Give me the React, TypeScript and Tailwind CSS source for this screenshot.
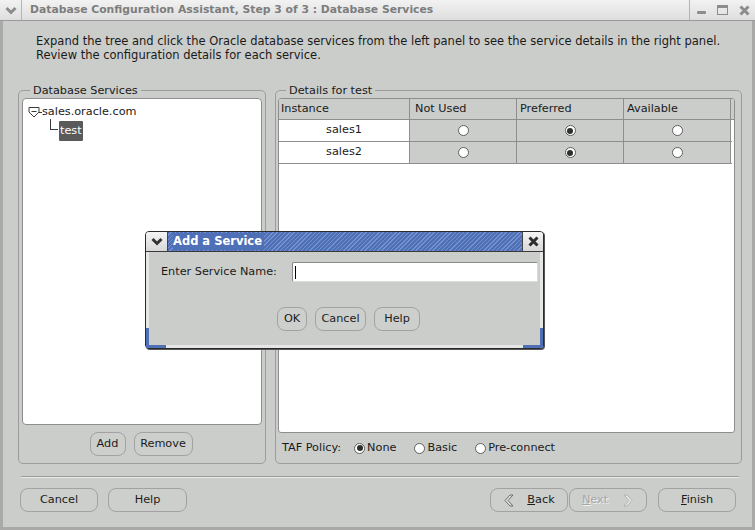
import type { ReactNode } from "react";
import clsx from "clsx";

function Radio({ on }: { on?: boolean }) {
  return (
    <span className="inline-flex h-[11px] w-[11px] shrink-0 items-center justify-center rounded-full border border-[#5e5e5e] bg-white">
      {on && <span className="h-[6px] w-[6px] rounded-full bg-[#2e2e2e]" />}
    </span>
  );
}

function Btn({ children, className }: { children: ReactNode; className?: string }) {
  return (
    <div
      className={clsx(
        "flex h-[24px] shrink-0 items-center justify-center rounded-[8px] border border-[#a2a2a2] bg-[#cdcfcc] text-[#1c1c1c]",
        className
      )}
    >
      {children}
    </div>
  );
}

function Chevron({ color }: { color: string }) {
  return (
    <svg width="12" height="9" viewBox="0 0 12 9">
      <path d="M1.5 2 L6 6.5 L10.5 2" fill="none" stroke={color} strokeWidth="3" />
    </svg>
  );
}

function CloseX({ color }: { color: string }) {
  return (
    <svg width="11" height="11" viewBox="0 0 11 11">
      <path d="M1.5 1.5 L9.5 9.5 M9.5 1.5 L1.5 9.5" stroke={color} strokeWidth="3" />
    </svg>
  );
}

const rows = ["sales1", "sales2"];

export default function App() {
  return (
    <div className="relative flex h-[530px] w-[755px] flex-col overflow-hidden bg-[#cbcdca] font-['DejaVu_Sans',sans-serif] text-[11.25px] text-[#1a1a1a]">
      {/* window title bar */}
      <div className="flex h-[21px] shrink-0 items-center border-b border-[#9a9a9a] bg-[linear-gradient(#f2f2f2,#dedede)]">
        <div className="flex h-full w-[22px] items-center justify-center border-r border-[#b4b4b4]">
          <Chevron color="#8c8c8c" />
        </div>
        <div className="ml-[8px] flex-1 text-[10.8px] font-bold text-[#7d7d7d]">
          Database Configuration Assistant, Step 3 of 3 : Database Services
        </div>
        <div className="flex h-full items-center gap-[11px] border-l border-[#b4b4b4] pl-[7px] pr-[5px]">
          <span className="mt-[5px] h-[3px] w-[9px] rounded-[1px] bg-[#8c8c8c]" />
          <span className="h-[10px] w-[11px] border border-t-[3px] border-[#8c8c8c]" />
          <CloseX color="#8c8c8c" />
        </div>
      </div>

      <div className="flex flex-1 flex-col border-x-[3px] border-b-[3px] border-[#a9aaa8] pl-[15px] pr-[9px]">
        <p className="ml-[18px] mt-[13px] text-[11.5px] leading-[14px]">
          Expand the tree and click the Oracle database services from the left panel to see the service details in the right panel.
          <br />
          Review the configuration details for each service.
        </p>

        <div className="mt-[22px] flex gap-[9px]">
          <fieldset className="flex h-[380px] w-[248px] flex-col rounded-[5px] border border-[#9c9c9c] px-[3px] pb-[8px]">
            <legend className="ml-[8px] px-[3px] leading-[13px]">Database Services</legend>
            <div className="mt-[1px] h-[327px] shrink-0 rounded-[4px] border border-[#8e8e8e] bg-white px-[5px] pt-[5px]">
              <div className="flex items-center">
                <svg width="12" height="12" viewBox="0 0 12 12">
                  <path d="M1 1.5 H11 V6 L6 11 L1 6 Z" fill="white" stroke="#3a3a3a" strokeWidth="1" />
                  <path d="M3.5 5.5 H8.5" stroke="#3a3a3a" strokeWidth="1" />
                </svg>
                <span className="-ml-[1px] h-[1px] w-[3px] bg-[#3a3a3a]" />
                <span className="leading-[16px]">sales.oracle.com</span>
              </div>
              <div className="ml-[22px] flex items-start">
                <span className="mt-[-1px] h-[11px] w-[8px] border-b border-l border-[#3a3a3a]" />
                <span className="ml-[1px] mt-[1px] rounded-[1px] bg-[#5a5a5a] px-[1px] leading-[20px] text-white">test</span>
              </div>
            </div>
            <div className="mt-[7px] flex justify-center gap-[8px] pr-[2px]">
              <Btn className="h-[23px] w-[36px]">Add</Btn>
              <Btn className="h-[23px] w-[59px]">Remove</Btn>
            </div>
          </fieldset>

          <fieldset className="flex h-[380px] w-[467px] flex-col rounded-[5px] border border-[#9c9c9c] pl-[2px] pr-[6px] pb-[8px]">
            <legend className="ml-[8px] px-[3px] leading-[13px]">Details for test</legend>
            <div className="mt-[1px] h-[335px] shrink-0 overflow-hidden rounded-[3px] border border-[#8e8e8e] bg-white">
              <div className="flex h-[21px] border-b border-[#8e8e8e] bg-[#cbcdca]">
                <div className="w-[131px] border-r border-[#8e8e8e] pl-[2px] leading-[20px]">Instance</div>
                <div className="w-[107px] border-r border-[#8e8e8e] pl-[5px] leading-[20px]">Not Used</div>
                <div className="w-[107px] border-r border-[#8e8e8e] pl-[3px] leading-[20px]">Preferred</div>
                <div className="w-[107px] border-r border-[#8e8e8e] pl-[3px] leading-[20px]">Available</div>
                <div className="flex-1" />
              </div>
              {rows.map((r) => (
                <div key={r} className="flex h-[22px] w-[453px] border-b border-[#8e8e8e]">
                  <div className="flex w-[131px] items-center justify-center border-r border-[#8e8e8e] bg-white">{r}</div>
                  <div className="flex w-[107px] items-center justify-center border-r border-[#8e8e8e] bg-[#cbcdca]">
                    <Radio />
                  </div>
                  <div className="flex w-[107px] items-center justify-center border-r border-[#8e8e8e] bg-[#cbcdca]">
                    <Radio on />
                  </div>
                  <div className="flex w-[107px] items-center justify-center border-r border-[#8e8e8e] bg-[#cbcdca]">
                    <Radio />
                  </div>
                </div>
              ))}
            </div>
            <div className="mt-[8px] flex shrink-0 items-center pl-[4px] leading-[14px]">
              <span className="mr-[13px]">TAF Policy:</span>
              <Radio on />
              <span className="ml-[2px] mr-[18px]">None</span>
              <Radio />
              <span className="ml-[2px] mr-[18px]">Basic</span>
              <Radio />
              <span className="ml-[2px]">Pre-connect</span>
            </div>
          </fieldset>
        </div>

        <div className="mr-[4px] mt-[12px] ml-[3px] h-[2px] border-t border-b border-t-[#9a9a9a] border-b-[#ececec]" />

        <div className="mt-[10px] flex items-center pl-[2px] pr-[7px]">
          <Btn className="w-[78px]">Cancel</Btn>
          <Btn className="ml-[10px] w-[79px]">Help</Btn>
          <div className="flex-1" />
          <Btn className="w-[78px] gap-[12px]">
            <svg width="12" height="13" viewBox="0 0 12 13">
              <path d="M7 1 L2 6.5 L7 12 L10 12 L5 6.5 L10 1 Z" fill="#e4e4e4" stroke="#6a6a6a" strokeWidth="1" strokeLinejoin="round" />
            </svg>
            <span>
              <u>B</u>ack
            </span>
          </Btn>
          <Btn className="ml-[1px] w-[78px] gap-[14px] text-[#a6a6a6]">
            <span className="[text-shadow:1px_1px_0_#f0f0f0]">
              <u>N</u>ext
            </span>
            <svg width="12" height="13" viewBox="0 0 12 13">
              <path d="M5 1 L10 6.5 L5 12 L2 12 L7 6.5 L2 1 Z" fill="#eaeaea" stroke="#b0b0b0" strokeWidth="1" strokeLinejoin="round" />
            </svg>
          </Btn>
          <Btn className="ml-[11px] w-[78px]">
            <span>
              <u>F</u>inish
            </span>
          </Btn>
        </div>
      </div>

      {/* Add a Service dialog */}
      <div className="absolute left-[145px] top-[231px] flex h-[118px] w-[399px] flex-col rounded-[4px] border border-[#2a2a2a] bg-[#cbcdca] shadow-[1px_1px_0_#555]">
        <div className="flex h-[20px] border-b border-[#3a3a3a]">
          <div className="flex w-[22px] items-center justify-center rounded-tl-[3px] border-r border-[#444] bg-[linear-gradient(#f4f4f4,#d8d8d8)]">
            <Chevron color="#333" />
          </div>
          <div className="flex flex-1 items-center bg-[repeating-linear-gradient(135deg,#4f70b6_0px,#4f70b6_2px,#7390cf_2px,#7390cf_3px)] pl-[5px]">
            <span className="bg-[#4f70b6] pr-[2px] text-[11.5px] font-bold text-white">Add a Service</span>
          </div>
          <div className="flex w-[21px] items-center justify-center rounded-tr-[3px] border-l border-[#444] bg-[linear-gradient(#f4f4f4,#d8d8d8)]">
            <CloseX color="#2e2e2e" />
          </div>
        </div>
        <div className="relative flex flex-1 flex-col border-x-[3px] border-b-[3px] border-[#e6e6e6]">
          <div className="mt-[10px] flex items-center pl-[12px]">
            <span className="w-[131px]">Enter Service Name:</span>
            <div className="flex h-[20px] w-[246px] items-center rounded-[2px] border border-[#8a8a8a] border-b-[#dcdcdc] border-r-[#dcdcdc] bg-white pl-[2px]">
              <span className="h-[13px] w-[1px] bg-black" />
            </div>
          </div>
          <div className="mt-[25px] flex justify-center gap-[8px] pl-[8px]">
            <Btn className="h-[24px] w-[30px]">OK</Btn>
            <Btn className="h-[24px] w-[51px]">Cancel</Btn>
            <Btn className="h-[24px] w-[46px]">Help</Btn>
          </div>
          <span className="absolute -bottom-[3px] -left-[3px] h-[20px] w-[3px] bg-[#4f70b6]" />
          <span className="absolute -bottom-[3px] -left-[3px] h-[3px] w-[20px] bg-[#4f70b6]" />
          <span className="absolute -bottom-[3px] -right-[3px] h-[20px] w-[3px] bg-[#4f70b6]" />
          <span className="absolute -bottom-[3px] -right-[3px] h-[3px] w-[20px] bg-[#4f70b6]" />
        </div>
      </div>
    </div>
  );
}
